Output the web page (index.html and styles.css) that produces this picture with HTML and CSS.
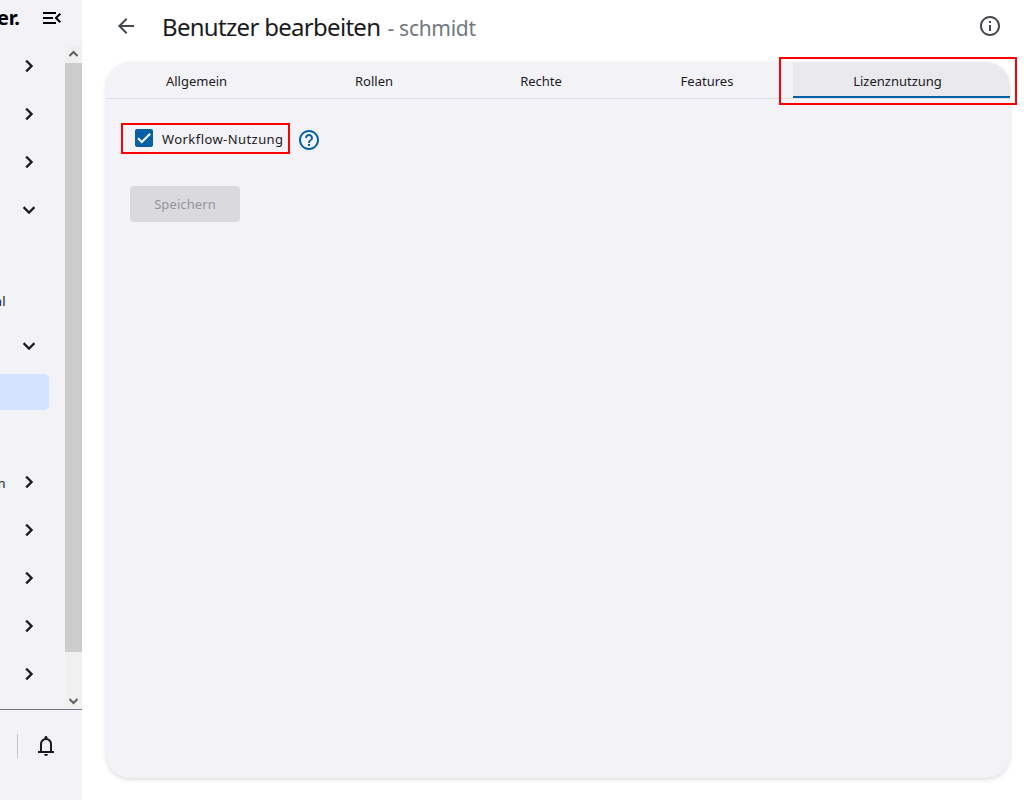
FILE: index.html
```html
<!DOCTYPE html>
<html lang="de">
<head>
<meta charset="utf-8">
<title>Benutzer bearbeiten</title>
<link rel="stylesheet" href="styles.css">
</head>
<body>
<svg class="defs" aria-hidden="true">
  <symbol id="right" viewBox="0 0 24 24"><path d="M10 6 8.59 7.41 13.17 12l-4.58 4.59L10 18l6-6z"/></symbol>
  <symbol id="down" viewBox="0 0 24 24"><path d="M16.59 8.59 12 13.17 7.41 8.59 6 10l6 6 6-6z"/></symbol>
</svg>
<div class="app">
  <aside class="sidebar">
    <header class="brand">
      <span class="logo">er.</span>
      <svg class="icon" viewBox="0 0 24 24"><path d="M3 18h13v-2H3v2zM3 6v2h13V6H3zm0 7h10v-2H3v2zm18 2.59L17.42 12 21 8.41 19.59 7l-5 5 5 5L21 15.59z"/></svg>
    </header>
    <div class="nav-wrap">
      <nav class="nav">
        <div class="row"><svg class="icon"><use href="#right"/></svg></div>
        <div class="row"><svg class="icon"><use href="#right"/></svg></div>
        <div class="row"><svg class="icon"><use href="#right"/></svg></div>
        <div class="row open"><svg class="icon"><use href="#down"/></svg></div>
        <div class="row child"></div>
        <div class="row child"><span class="cut">al</span></div>
        <div class="row child"><svg class="icon"><use href="#down"/></svg></div>
        <div class="row selected"></div>
        <div class="row child"></div>
        <div class="row"><span class="cut low">n</span><svg class="icon"><use href="#right"/></svg></div>
        <div class="row"><svg class="icon"><use href="#right"/></svg></div>
        <div class="row"><svg class="icon"><use href="#right"/></svg></div>
        <div class="row"><svg class="icon"><use href="#right"/></svg></div>
        <div class="row"><svg class="icon"><use href="#right"/></svg></div>
      </nav>
      <div class="scrollbar">
        <svg class="arrow" viewBox="0 0 17 17"><path d="M4.5 10 8.5 6l4 4"/></svg>
        <div class="thumb"></div>
        <svg class="arrow" viewBox="0 0 17 17"><path d="M4.5 7 8.500 11l4-4"/></svg>
      </div>
    </div>
    <footer class="foot">
      <span class="divider"></span>
      <svg class="icon" viewBox="0 0 24 24"><path d="M4 19v-2h2v-7c0-1.380.42-2.610 1.250-3.690C8.080 5.230 9.170 4.530 10.500 4.200v-.7c0-.83.67-1.500 1.500-1.500s1.500.67 1.500 1.500v.7c1.330.33 2.420 1.030 3.250 2.110C17.580 7.390 18 8.620 18 10v7h2v2zm8 3c-1.100 0-2-.9-2-2h4c0 1.100-.9 2-2 2zm-4-5h8v-7c0-2.200-1.800-4-4-4s-4 1.800-4 4z"/></svg>
    </footer>
  </aside>
  <main class="main">
    <header class="head">
      <svg class="icon" viewBox="0 0 24 24"><path d="M20 11H7.830l5.590-5.590L12 4l-8 8 8 8 1.410-1.410L7.830 13H20v-2z"/></svg>
      <h1><span class="title">Benutzer bearbeiten</span><span class="user">- schmidt</span></h1>
      <svg class="icon" viewBox="0 0 24 24"><path d="M11 7h2v2h-2zm0 4h2v6h-2zm1-9C6.480 2 2 6.480 2 12s4.480 10 10 10 10-4.480 10-10S17.520 2 12 2zm0 18c-4.410 0-8-3.590-8-8s3.590-8 8-8 8 3.590 8 8-3.590 8-8 8z"/></svg>
    </header>
    <section class="card">
      <div class="tabs">
        <span class="tab">Allgemein</span>
        <span class="tab">Rollen</span>
        <span class="tab">Rechte</span>
        <span class="tab">Features</span>
        <span class="tab active">Lizenznutzung</span>
      </div>
      <div class="form">
        <div class="field">
          <span class="check"><svg viewBox="0 0 18 18"><path d="M3 9.300 6.800 13 15.200 4.800"/></svg></span>
          <span class="label">Workflow-Nutzung</span>
          <svg class="icon help" viewBox="0 0 24 24"><path d="M11 18h2v-2h-2v2zm1-16C6.480 2 2 6.480 2 12s4.480 10 10 10 10-4.480 10-10S17.520 2 12 2zm0 18c-4.410 0-8-3.590-8-8s3.590-8 8-8 8 3.590 8 8-3.590 8-8 8zm0-14c-2.210 0-4 1.790-4 4h2c0-1.100.9-2 2-2s2 .9 2 2c0 2-3 1.750-3 5h2c0-2.250 3-2.500 3-5 0-2.210-1.790-4-4-4z"/></svg>
        </div>
        <button class="save" disabled>Speichern</button>
      </div>
    </section>
  </main>
</div>
<div class="mark mark-tab"></div>
<div class="mark mark-field"></div>
</body>
</html>
```
FILE: styles.css
```css
* { box-sizing: border-box; }
body { margin: 0; background: #fff; color: #1b1b1f; font: 13px "Noto Sans", "Open Sans", sans-serif; overflow: hidden; }
.defs { position: absolute; width: 0; height: 0; }
.app { display: flex; height: 800px; }
.icon { width: 24px; height: 24px; flex: none; fill: currentColor; display: block; }

.sidebar { width: 82px; flex: none; background: #f3f2f7; display: flex; flex-direction: column; overflow: hidden; }
.brand { height: 46px; flex: none; display: flex; padding-top: 6px; color: #000; }
.logo { width: 40px; display: flex; justify-content: flex-end; padding-right: 20.5px; font: bold 20px/23px "Noto Sans", sans-serif; letter-spacing: -.3px; white-space: nowrap; }
.nav-wrap { height: 663px; flex: none; display: flex; }
.nav { width: 65px; }
.row { height: 48px; display: flex; align-items: center; justify-content: flex-end; padding-right: 24.5px; }
.row .icon { stroke: currentColor; stroke-width: .4; }
.row:first-child { height: 44px; padding-bottom: 4px; }
.row.open { height: 47px; }
.row.child { height: 45px; padding-bottom: 2px; padding-right: 24px; }
.row:nth-child(5) { height: 46px; }
.row:nth-child(9) { height: 48px; }
.row.open { padding-right: 24px; }
.row.selected { height: 36px; margin: 5px 16px 0 0; background: #d3e4ff; border-radius: 0 5px 5px 0; }
.cut { width: 6px; margin-right: 11px; display: flex; justify-content: flex-end; }
.row.child .cut { margin-right: 35.5px; }
.cut.low { padding-top: 2px; }
.scrollbar { width: 17px; background: #f0f0f0; display: flex; flex-direction: column; }
.arrow { width: 17px; height: 17px; flex: none; fill: none; stroke: #606060; stroke-width: 2; }
.thumb { height: 589px; margin-bottom: auto; background: #cdcdcd; }
.foot { flex: 1; border-top: 1px solid #77777d; display: flex; padding: 24px 0 0 17px; }
.divider { width: 1px; height: 24px; margin-right: 16px; background: #c4c4ca; }

.main { flex: 1; padding: 0 13px 0 24px; }
.head { height: 62px; display: flex; padding: 14px 9px 0 8px; color: #43474e; }
h1 { flex: 1; margin: -5px 0 0 24px; font-weight: 400; line-height: 34px; white-space: nowrap; }
.title { color: #1b1b1f; font-size: 24px; letter-spacing: -.7px; display: inline-block; width: 225.500px; }
.user { color: #73777f; font-size: 21px; letter-spacing: -.3px; }
.card { width: 904px; height: 716px; background: #f3f2f7; border-radius: 24px; overflow: hidden; box-shadow: 0 2px 4px rgba(0,0,0,.1), 0 1px 4px rgba(0,0,0,.04); }
.tabs { height: 37px; border-bottom: 1px solid #e0e0eb; display: grid; grid-template-columns: 181px 174px 160px 172px 217px; }
.tab { text-align: center; line-height: 38px; height: 36px; }
.active { background: #eae9ee; border-bottom: 2px solid #0560a6; padding-right: 8px; border-top-right-radius: 24px; }
.form { padding: 28px 24px; }
.field { display: flex; align-items: center; height: 26px; padding-left: 5px; }
.check { width: 18px; height: 18px; margin: -4px 9px 0 0; background: #0560a6; border-radius: 2px; }
.check svg { display: block; fill: none; stroke: #fff; stroke-width: 2; }
.label { width: 122px; margin-top: -3px; letter-spacing: .43px; white-space: nowrap; }
.help { color: #0560a6; margin-left: 13px; }
.save { display: block; width: 110px; height: 36px; margin-top: 33px; padding: 0; border: 0; border-radius: 4px; background: #dad9de; color: #96959b; font: inherit; letter-spacing: .1px; }
.mark { position: absolute; border: 2px solid #f00; }
.mark-tab { left: 779px; top: 57px; width: 238px; height: 48px; }
.mark-field { left: 121px; top: 123px; width: 169px; height: 31px; }
```
